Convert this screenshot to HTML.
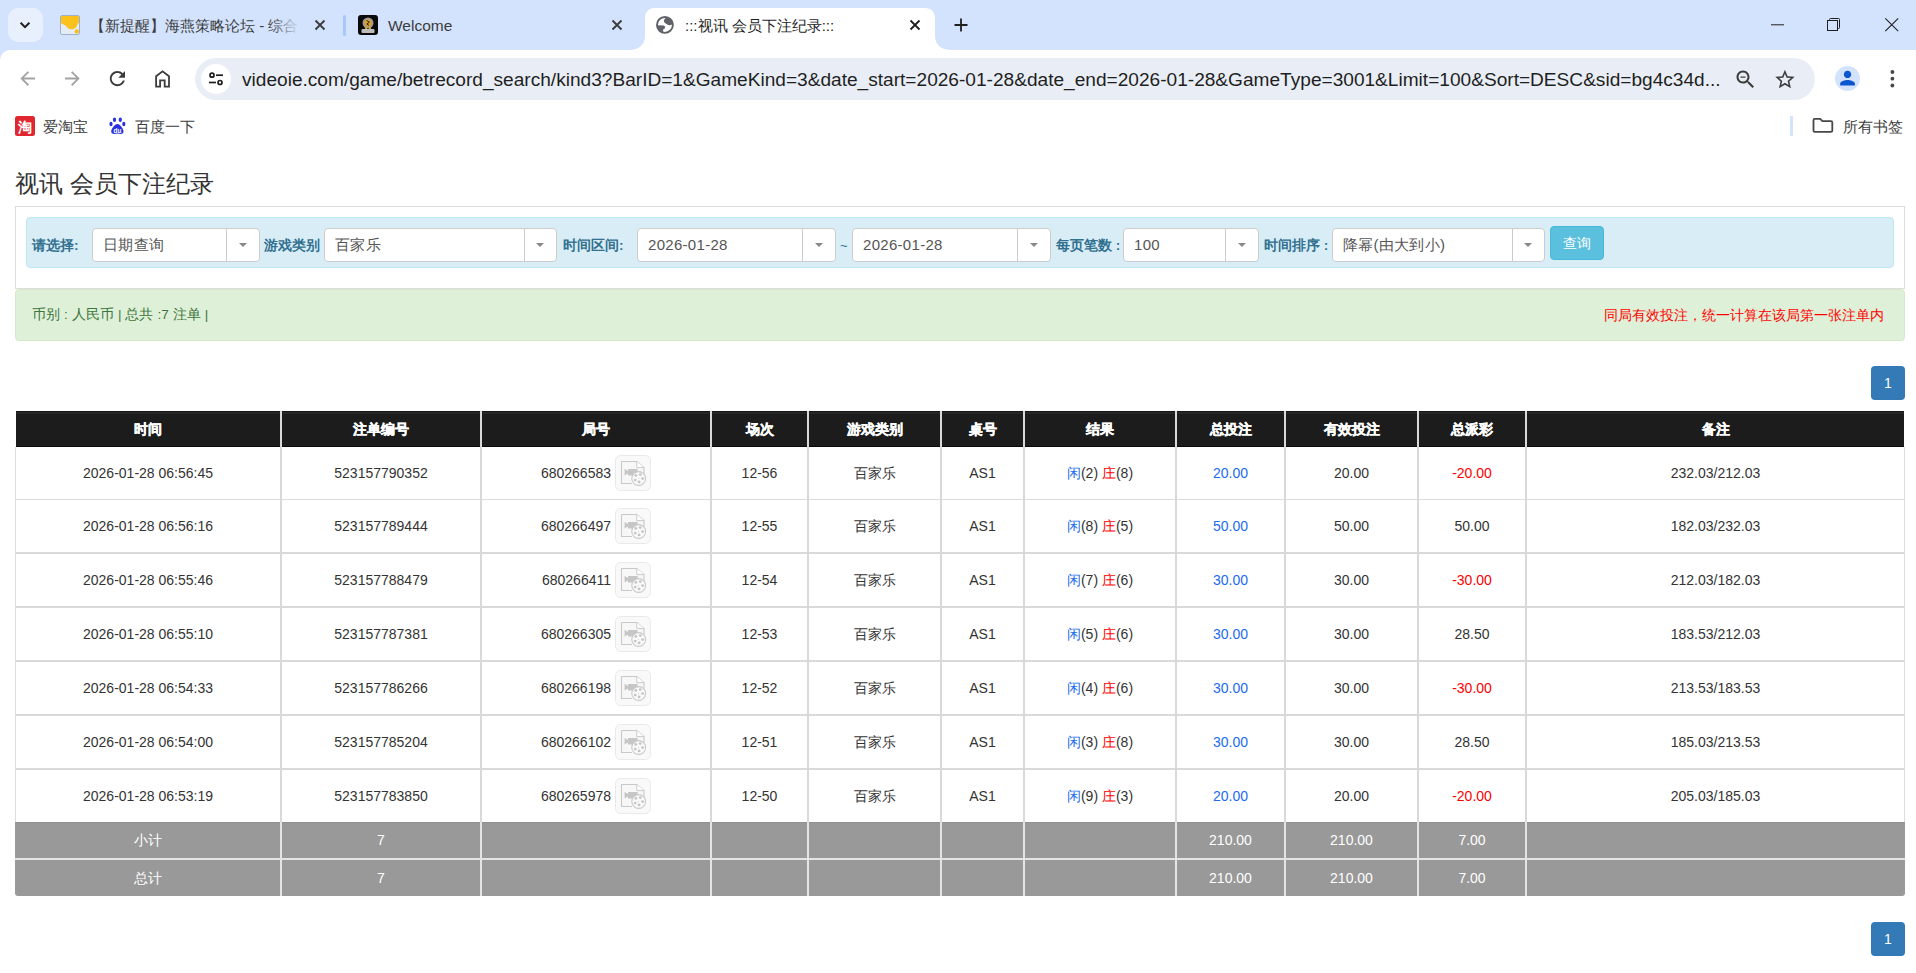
<!DOCTYPE html>
<html><head><meta charset="utf-8"><style>
*{box-sizing:border-box;margin:0;padding:0}
html,body{width:1916px;height:973px;overflow:hidden;background:#fff;font-family:"Liberation Sans",sans-serif;color:#333}
div,span,svg{position:absolute}
.t{white-space:nowrap;line-height:16px}
.c{text-align:center}
</style></head><body>
<div style="left:0px;top:0px;width:1916px;height:62px;background:#d3e3fd"></div>
<div style="left:8px;top:8px;width:35px;height:34px;background:#e8f0fe;border-radius:10px"></div>
<svg style="left:17px;top:17px" width="16" height="16" viewBox="0 0 16 16"><path d="M3.6 5.8 L8 10.2 L12.4 5.8" fill="none" stroke="#1f1f1f" stroke-width="2"/></svg>
<svg style="left:60px;top:15px" width="20" height="20" viewBox="0 0 20 20"><rect x="0.5" y="0.5" width="19" height="19" rx="1.5" fill="#e6ecf5" stroke="#9fb0c8"/><path d="M1 1 H19 V7.6 Q18 8.6 17.4 9.6 A6 6 0 0 1 6.2 11 Q4 10 1 8.2 Z" fill="#fbc21e"/><circle cx="16.8" cy="16.4" r="2.2" fill="#f9bd1a"/></svg>
<div class="t" style="left:90px;top:16.80px;font-size:15px;line-height:18px;color:#3c3c3c;font-weight:400;width:208px;overflow:hidden;">【新提醒】海燕策略论坛 - 综合</div>
<div style="left:270px;top:14px;width:30px;height:22px;background:linear-gradient(to right,rgba(211,227,253,0),#d3e3fd)"></div>
<svg style="left:313px;top:18px" width="14" height="14" viewBox="0 0 14 14"><path d="M2.5 2.5 L11.5 11.5 M11.5 2.5 L2.5 11.5" stroke="#3c3c3c" stroke-width="1.9"/></svg>
<div style="left:343px;top:15px;width:3px;height:21px;background:#a8c7fa;border-radius:2px"></div>
<svg style="left:358px;top:15px" width="20" height="20" viewBox="0 0 20 20"><rect x="0" y="0" width="20" height="20" rx="3" fill="#0a0a0a"/><circle cx="10" cy="8" r="5.5" fill="#9a9a9a"/><circle cx="10" cy="8" r="3.6" fill="#e0a21a"/><path d="M8.6 5.6 L11.4 7.2 L8.8 9 L11 10.4" stroke="#222" stroke-width="1" fill="none"/><rect x="3.5" y="14" width="13" height="4" rx="1" fill="#bdbdbd"/><rect x="7" y="12" width="2" height="2" fill="#e0a21a"/><rect x="11" y="12" width="2" height="2" fill="#e0a21a"/></svg>
<div class="t" style="left:388px;top:16.13px;font-size:15.5px;line-height:19px;color:#3c3c3c;font-weight:400;">Welcome</div>
<svg style="left:610px;top:18px" width="14" height="14" viewBox="0 0 14 14"><path d="M2.5 2.5 L11.5 11.5 M11.5 2.5 L2.5 11.5" stroke="#3c3c3c" stroke-width="1.9"/></svg>
<svg style="left:629px;top:8px" width="322" height="42" viewBox="0 0 322 42"><path d="M0 42 C8 42 16 38 16 28 V10 C16 4 20 0 26 0 H296 C302 0 306 4 306 10 V28 C306 38 314 42 322 42 Z" fill="#fff"/></svg>
<svg style="left:656px;top:16px" width="18" height="18" viewBox="0 0 18 18"><circle cx="8.9" cy="8.9" r="7.95" fill="#fff" stroke="#5f6368" stroke-width="1.9"/><path d="M10 1.2 L7.9 4.2 Q7.4 6.2 9.4 7.3 L11.3 8.5 Q13 9.8 15.6 8.8 L17.5 7.2 A8.5 8.5 0 0 0 10 1.2 Z" fill="#5f6368"/><path d="M0.8 9.2 L7.9 9.4 Q9.8 10.5 8.8 12.5 L7.2 13.6 Q6.8 14.8 7.3 17.2 A8.5 8.5 0 0 1 0.8 9.2 Z" fill="#5f6368"/></svg>
<div class="t" style="left:685px;top:16.80px;font-size:15px;line-height:18px;color:#1f1f1f;font-weight:400;">:::视讯 会员下注纪录:::</div>
<svg style="left:908px;top:18px" width="14" height="14" viewBox="0 0 14 14"><path d="M2.5 2.5 L11.5 11.5 M11.5 2.5 L2.5 11.5" stroke="#1f1f1f" stroke-width="1.8"/></svg>
<svg style="left:953px;top:17px" width="16" height="16" viewBox="0 0 16 16"><path d="M8 1.5 V14.5 M1.5 8 H14.5" stroke="#1f1f1f" stroke-width="1.8"/></svg>
<svg style="left:1770px;top:18px" width="16" height="14" viewBox="0 0 16 14"><path d="M1 6.8 H14" stroke="#1f1f1f" stroke-width="1"/></svg>
<svg style="left:1826px;top:16px" width="16" height="16" viewBox="0 0 16 16"><path d="M3.5 4 V3.5 Q3.5 2.5 4.5 2.5 H12.5 Q13.5 2.5 13.5 3.5 V11.5 Q13.5 12.5 12.5 12.5 H12" fill="none" stroke="#1f1f1f" stroke-width="1"/><rect x="1.5" y="4.5" width="10" height="10" fill="none" stroke="#1f1f1f" stroke-width="1"/></svg>
<svg style="left:1884px;top:17px" width="16" height="16" viewBox="0 0 16 16"><path d="M1.3 1.3 L14.2 14.2 M14.2 1.3 L1.3 14.2" stroke="#1f1f1f" stroke-width="1.1"/></svg>
<div style="left:0;top:50px;width:1916px;height:56px;background:#fff;border-radius:10px 0 0 0"></div>
<svg style="left:0px;top:50px" width="200" height="56" viewBox="0 0 200 56"><path transform="translate(16.7,17.5) scale(0.92)" d="M20 11H7.83l5.59-5.59L12 4l-8 8 8 8 1.41-1.41L7.83 13H20v-2z" fill="#a3a3a3"/><path transform="translate(61.3,17.5) scale(0.92)" d="M12 4l-1.41 1.41L16.17 11H4v2h12.17l-5.58 5.59L12 20l8-8z" fill="#a3a3a3"/><path transform="translate(106,17.2) scale(0.95)" d="M17.65 6.35C16.2 4.9 14.21 4 12 4c-4.42 0-7.99 3.58-7.99 8s3.57 8 7.99 8c3.73 0 6.84-2.550 7.73-6h-2.08c-.82 2.33-3.04 4-5.650 4-3.31 0-6-2.69-6-6s2.690-6 6-6c1.66 0 3.14.69 4.22 1.78L13 11h7V4l-2.35 2.35z" fill="#3c3c3c"/><path d="M156.1 36.6 V26.3 L162.55 21.3 L169 26.3 V36.6 H164.7 V30.3 H160.1 V36.6 Z" fill="none" stroke="#3c3c3c" stroke-width="1.8" stroke-linejoin="miter"/></svg>
<div style="left:195px;top:58px;width:1620px;height:42px;background:#e9eef6;border-radius:21px"></div>
<div style="left:201px;top:64px;width:30px;height:30px;background:#fff;border-radius:15px"></div>
<svg style="left:206px;top:69px" width="20" height="20" viewBox="0 0 20 20"><circle cx="6" cy="6.2" r="2" fill="none" stroke="#1f1f1f" stroke-width="1.7"/><path d="M10 6.2 H17" stroke="#1f1f1f" stroke-width="1.7"/><circle cx="14" cy="13.5" r="2" fill="none" stroke="#1f1f1f" stroke-width="1.7"/><path d="M3 13.5 H10" stroke="#1f1f1f" stroke-width="1.7"/></svg>
<div class="t" style="left:242px;top:67.88px;font-size:19.1px;line-height:23px;color:#1f1f1f;font-weight:400;letter-spacing:0px;">videoie.com/game/betrecord_search/kind3?BarID=1&amp;GameKind=3&amp;date_start=2026-01-28&amp;date_end=2026-01-28&amp;GameType=3001&amp;Limit=100&amp;Sort=DESC&amp;sid=bg4c34d...</div>
<svg style="left:1700px;top:50px" width="216" height="56" viewBox="0 0 216 56"><path transform="translate(33.5,17.5)" d="M15.5 14h-.79l-.28-.27C15.41 12.59 16 11.11 16 9.5 16 5.910 13.09 3 9.5 3S3 5.91 3 9.5 5.91 16 9.5 16c1.61 0 3.09-.59 4.23-1.57l.27.28v.79l5 4.99L20.49 19l-4.99-5zm-6 0C7.01 14 5 11.99 5 9.5S7.01 5 9.5 5 14 7.01 14 9.5 11.99 14 9.5 14zM7 9h5v1.2H7z" fill="#3c3c3c"/><path transform="translate(73.3,17.9) scale(0.97)" d="M22 9.24l-7.19-.62L12 2 9.19 8.63 2 9.24l5.46 4.73L5.82 21 12 17.27 18.18 21l-1.63-7.03L22 9.24zM12 15.4l-3.760 2.27 1-4.28-3.32-2.88 4.38-.38L12 6.1l1.71 4.04 4.38.38-3.32 2.88 1 4.28L12 15.4z" fill="#3c3c3c"/></svg>
<div style="left:1835px;top:66px;width:25px;height:25px;background:#d3e3fd;border-radius:13px"></div>
<svg style="left:1835px;top:66px" width="25" height="25" viewBox="0 0 25 25"><path transform="translate(1.5,1.04) scale(0.92)" d="M12 12c2.21 0 4-1.79 4-4s-1.79-4-4-4-4 1.79-4 4 1.79 4 4 4zm0 2c-2.67 0-8 1.34-8 4v2h16v-2c0-2.66-5.33-4-8-4z" fill="#0b57d0"/></svg>
<svg style="left:1888px;top:69px" width="9" height="20" viewBox="0 0 9 20"><circle cx="4.4" cy="3" r="1.9" fill="#474747"/><circle cx="4.4" cy="9.7" r="1.9" fill="#474747"/><circle cx="4.4" cy="16.5" r="1.9" fill="#474747"/></svg>
<svg style="left:15px;top:116px" width="20" height="20" viewBox="0 0 20 20"><rect x="0" y="0" width="20" height="20" rx="2.5" fill="#e0262f"/><text x="10" y="15.5" font-size="14" text-anchor="middle" fill="#fff" font-weight="700" font-family="Liberation Sans">淘</text></svg>
<div class="t" style="left:43px;top:119.48px;font-size:14.5px;line-height:17px;color:#3c3c3c;font-weight:400;">爱淘宝</div>
<svg style="left:109px;top:117px" width="17" height="18" viewBox="0 0 17 18"><ellipse cx="5.5" cy="2.8" rx="1.6" ry="2.2" fill="#2932e1"/><ellipse cx="11.3" cy="2.8" rx="1.6" ry="2.2" fill="#2932e1"/><ellipse cx="2" cy="7" rx="1.6" ry="2.2" fill="#2932e1"/><ellipse cx="14.8" cy="7" rx="1.6" ry="2.2" fill="#2932e1"/><path d="M8.4 7 C11 7 15 12 14.5 15 C14 17.5 11 17 8.4 16.5 C5.8 17 2.8 17.5 2.3 15 C1.8 12 5.8 7 8.4 7 Z" fill="#2932e1"/><text x="8.4" y="16" font-size="6.5" text-anchor="middle" fill="#fff" font-family="Liberation Sans" font-weight="700">du</text></svg>
<div class="t" style="left:135px;top:119.48px;font-size:14.5px;line-height:17px;color:#3c3c3c;font-weight:400;">百度一下</div>
<div style="left:1790px;top:116px;width:3px;height:20px;background:#d3e3fd;border-radius:1px"></div>
<svg style="left:1812px;top:117px" width="22" height="17" viewBox="0 0 22 17"><path d="M1.5 3.2 C1.5 2.5 2 1.9 2.8 1.9 H8.2 L10.4 4.2 H19 C19.8 4.2 20.3 4.8 20.3 5.5 V13.6 C20.3 14.3 19.8 14.9 19 14.9 H2.8 C2 14.9 1.5 14.3 1.5 13.6 Z" fill="none" stroke="#474747" stroke-width="1.8"/></svg>
<div class="t" style="left:1843px;top:119.48px;font-size:14.5px;line-height:17px;color:#3c3c3c;font-weight:400;">所有书签</div>
<div class="t" style="left:15px;top:169.18px;font-size:24px;line-height:29px;color:#333;font-weight:400;">视讯 会员下注纪录</div>
<div style="left:15px;top:206px;width:1890px;height:83px;border:1px solid #ddd;border-bottom:1px solid #ddd"></div>
<div style="left:26px;top:217px;width:1868px;height:51px;background:#d9edf7;border:1px solid #bce8f1;border-radius:4px"></div>
<div class="t" style="left:32px;top:238.25px;font-size:13.7px;line-height:16px;color:#31708f;font-weight:700;">请选择:</div>
<div style="left:92px;top:228px;width:168px;height:34px;background:#fff;border:1px solid #ccc;border-radius:4px"></div>
<div style="left:226px;top:229px;width:1px;height:32px;background:#ccc"></div>
<svg style="left:239px;top:243px" width="8" height="4" viewBox="0 0 8 4"><path d="M0 0 H8 L4 4 Z" fill="#888"/></svg>
<div class="t" style="left:103px;top:235.80px;font-size:15px;line-height:18px;color:#555;font-weight:400;letter-spacing:0.3px;">日期查询</div>
<div class="t" style="left:264px;top:238.25px;font-size:13.7px;line-height:16px;color:#31708f;font-weight:700;">游戏类别</div>
<div style="left:324px;top:228px;width:233px;height:34px;background:#fff;border:1px solid #ccc;border-radius:4px"></div>
<div style="left:524px;top:229px;width:1px;height:32px;background:#ccc"></div>
<svg style="left:536px;top:243px" width="8" height="4" viewBox="0 0 8 4"><path d="M0 0 H8 L4 4 Z" fill="#888"/></svg>
<div class="t" style="left:335px;top:235.80px;font-size:15px;line-height:18px;color:#555;font-weight:400;letter-spacing:0.3px;">百家乐</div>
<div class="t" style="left:563px;top:238.25px;font-size:13.7px;line-height:16px;color:#31708f;font-weight:700;">时间区间:</div>
<div style="left:637px;top:228px;width:199px;height:34px;background:#fff;border:1px solid #ccc;border-radius:4px"></div>
<div style="left:802px;top:229px;width:1px;height:32px;background:#ccc"></div>
<svg style="left:815px;top:243px" width="8" height="4" viewBox="0 0 8 4"><path d="M0 0 H8 L4 4 Z" fill="#888"/></svg>
<div class="t" style="left:648px;top:235.80px;font-size:15px;line-height:18px;color:#555;font-weight:400;letter-spacing:0.3px;">2026-01-28</div>
<div class="t" style="left:840px;top:237.50px;font-size:13px;line-height:16px;color:#31708f;font-weight:400;">~</div>
<div style="left:852px;top:228px;width:199px;height:34px;background:#fff;border:1px solid #ccc;border-radius:4px"></div>
<div style="left:1017px;top:229px;width:1px;height:32px;background:#ccc"></div>
<svg style="left:1030px;top:243px" width="8" height="4" viewBox="0 0 8 4"><path d="M0 0 H8 L4 4 Z" fill="#888"/></svg>
<div class="t" style="left:863px;top:235.80px;font-size:15px;line-height:18px;color:#555;font-weight:400;letter-spacing:0.3px;">2026-01-28</div>
<div class="t" style="left:1056px;top:238.25px;font-size:13.7px;line-height:16px;color:#31708f;font-weight:700;">每页笔数 :</div>
<div style="left:1123px;top:228px;width:136px;height:34px;background:#fff;border:1px solid #ccc;border-radius:4px"></div>
<div style="left:1225px;top:229px;width:1px;height:32px;background:#ccc"></div>
<svg style="left:1238px;top:243px" width="8" height="4" viewBox="0 0 8 4"><path d="M0 0 H8 L4 4 Z" fill="#888"/></svg>
<div class="t" style="left:1134px;top:235.80px;font-size:15px;line-height:18px;color:#555;font-weight:400;letter-spacing:0.3px;">100</div>
<div class="t" style="left:1264px;top:238.25px;font-size:13.7px;line-height:16px;color:#31708f;font-weight:700;">时间排序 :</div>
<div style="left:1332px;top:228px;width:213px;height:34px;background:#fff;border:1px solid #ccc;border-radius:4px"></div>
<div style="left:1512px;top:229px;width:1px;height:32px;background:#ccc"></div>
<svg style="left:1524px;top:243px" width="8" height="4" viewBox="0 0 8 4"><path d="M0 0 H8 L4 4 Z" fill="#888"/></svg>
<div class="t" style="left:1343px;top:235.80px;font-size:15px;line-height:18px;color:#555;font-weight:400;letter-spacing:0.3px;">降幂(由大到小)</div>
<div style="left:1550px;top:226px;width:54px;height:34px;background:#5bc0de;border:1px solid #46b8da;border-radius:4px"></div>
<div class="t c" style="left:1377.0px;top:235.15px;width:400px;font-size:14px;line-height:17px;color:#fff;font-weight:400;">查询</div>
<div style="left:15px;top:289px;width:1890px;height:52px;background:#dff0d8;border:1px solid #d6e9c6;border-radius:4px"></div>
<div class="t" style="left:32px;top:307.32px;font-size:13.5px;line-height:16px;color:#3c763d;font-weight:400;letter-spacing:0.1px;">币别 : 人民币 | 总共 :7 注单 |</div>
<div class="t" style="left:1284px;top:306.65px;width:600px;text-align:right;font-size:14px;line-height:17px;color:#ff0000;font-weight:400;">同局有效投注，统一计算在该局第一张注单内</div>
<div style="left:1871px;top:366px;width:34px;height:34px;background:#337ab7;border-radius:4px"></div>
<div class="t c" style="left:1871.0px;top:374.65px;width:34px;font-size:14px;line-height:17px;color:#fff;font-weight:400;">1</div>
<div style="left:16px;top:411px;width:1888px;height:36px;background:#1c1c1c;border-top:1px solid #151515;border-bottom:1px solid #0a0a0a"></div>
<div style="left:16px;top:412px;width:1888px;height:2px;background:#262626"></div>
<div style="left:15px;top:447px;width:1890px;height:375px;background:#fff;border-left:1px solid #ddd;border-right:1px solid #ddd"></div>
<div style="left:16px;top:499px;width:1888px;height:1px;background:#dcdcdc"></div>
<div style="left:16px;top:552px;width:1888px;height:2px;background:#d9d9d9"></div>
<div style="left:16px;top:606px;width:1888px;height:2px;background:#d9d9d9"></div>
<div style="left:16px;top:660px;width:1888px;height:2px;background:#d9d9d9"></div>
<div style="left:16px;top:714px;width:1888px;height:2px;background:#d9d9d9"></div>
<div style="left:16px;top:768px;width:1888px;height:2px;background:#d9d9d9"></div>
<div style="left:15px;top:822px;width:1890px;height:74px;background:#999;border-radius:0 0 3px 3px"></div>
<div style="left:16px;top:822px;width:1888px;height:1px;background:#8f8f8f"></div>
<div style="left:15px;top:858px;width:1890px;height:2px;background:#e4e4e4"></div>
<div style="left:280px;top:411px;width:2px;height:36px;background:#d9d9d9"></div>
<div style="left:280px;top:447px;width:2px;height:375px;background:#d9d9d9"></div>
<div style="left:280px;top:822px;width:2px;height:74px;background:#e4e4e4"></div>
<div style="left:480px;top:411px;width:2px;height:36px;background:#d9d9d9"></div>
<div style="left:480px;top:447px;width:2px;height:375px;background:#d9d9d9"></div>
<div style="left:480px;top:822px;width:2px;height:74px;background:#e4e4e4"></div>
<div style="left:710px;top:411px;width:2px;height:36px;background:#d9d9d9"></div>
<div style="left:710px;top:447px;width:2px;height:375px;background:#d9d9d9"></div>
<div style="left:710px;top:822px;width:2px;height:74px;background:#e4e4e4"></div>
<div style="left:807px;top:411px;width:2px;height:36px;background:#d9d9d9"></div>
<div style="left:807px;top:447px;width:2px;height:375px;background:#d9d9d9"></div>
<div style="left:807px;top:822px;width:2px;height:74px;background:#e4e4e4"></div>
<div style="left:940px;top:411px;width:2px;height:36px;background:#d9d9d9"></div>
<div style="left:940px;top:447px;width:2px;height:375px;background:#d9d9d9"></div>
<div style="left:940px;top:822px;width:2px;height:74px;background:#e4e4e4"></div>
<div style="left:1023px;top:411px;width:2px;height:36px;background:#d9d9d9"></div>
<div style="left:1023px;top:447px;width:2px;height:375px;background:#d9d9d9"></div>
<div style="left:1023px;top:822px;width:2px;height:74px;background:#e4e4e4"></div>
<div style="left:1175px;top:411px;width:2px;height:36px;background:#d9d9d9"></div>
<div style="left:1175px;top:447px;width:2px;height:375px;background:#d9d9d9"></div>
<div style="left:1175px;top:822px;width:2px;height:74px;background:#e4e4e4"></div>
<div style="left:1284px;top:411px;width:2px;height:36px;background:#d9d9d9"></div>
<div style="left:1284px;top:447px;width:2px;height:375px;background:#d9d9d9"></div>
<div style="left:1284px;top:822px;width:2px;height:74px;background:#e4e4e4"></div>
<div style="left:1417px;top:411px;width:2px;height:36px;background:#d9d9d9"></div>
<div style="left:1417px;top:447px;width:2px;height:375px;background:#d9d9d9"></div>
<div style="left:1417px;top:822px;width:2px;height:74px;background:#e4e4e4"></div>
<div style="left:1525px;top:411px;width:2px;height:36px;background:#d9d9d9"></div>
<div style="left:1525px;top:447px;width:2px;height:375px;background:#d9d9d9"></div>
<div style="left:1525px;top:822px;width:2px;height:74px;background:#e4e4e4"></div>
<div class="t c" style="left:-2.0px;top:420.65px;width:300px;font-size:14px;line-height:17px;color:#fff;font-weight:700;-webkit-text-stroke:0.35px #fff;">时间</div>
<div class="t c" style="left:231.0px;top:420.65px;width:300px;font-size:14px;line-height:17px;color:#fff;font-weight:700;-webkit-text-stroke:0.35px #fff;">注单编号</div>
<div class="t c" style="left:446.0px;top:420.65px;width:300px;font-size:14px;line-height:17px;color:#fff;font-weight:700;-webkit-text-stroke:0.35px #fff;">局号</div>
<div class="t c" style="left:609.5px;top:420.65px;width:300px;font-size:14px;line-height:17px;color:#fff;font-weight:700;-webkit-text-stroke:0.35px #fff;">场次</div>
<div class="t c" style="left:724.5px;top:420.65px;width:300px;font-size:14px;line-height:17px;color:#fff;font-weight:700;-webkit-text-stroke:0.35px #fff;">游戏类别</div>
<div class="t c" style="left:832.5px;top:420.65px;width:300px;font-size:14px;line-height:17px;color:#fff;font-weight:700;-webkit-text-stroke:0.35px #fff;">桌号</div>
<div class="t c" style="left:950.0px;top:420.65px;width:300px;font-size:14px;line-height:17px;color:#fff;font-weight:700;-webkit-text-stroke:0.35px #fff;">结果</div>
<div class="t c" style="left:1080.5px;top:420.65px;width:300px;font-size:14px;line-height:17px;color:#fff;font-weight:700;-webkit-text-stroke:0.35px #fff;">总投注</div>
<div class="t c" style="left:1201.5px;top:420.65px;width:300px;font-size:14px;line-height:17px;color:#fff;font-weight:700;-webkit-text-stroke:0.35px #fff;">有效投注</div>
<div class="t c" style="left:1322.0px;top:420.65px;width:300px;font-size:14px;line-height:17px;color:#fff;font-weight:700;-webkit-text-stroke:0.35px #fff;">总派彩</div>
<div class="t c" style="left:1565.5px;top:420.65px;width:300px;font-size:14px;line-height:17px;color:#fff;font-weight:700;-webkit-text-stroke:0.35px #fff;">备注</div>
<div class="t c" style="left:-52.0px;top:464.65px;width:400px;font-size:14px;line-height:17px;color:#333;font-weight:400;">2026-01-28 06:56:45</div>
<div class="t c" style="left:181.0px;top:464.65px;width:400px;font-size:14px;line-height:17px;color:#333;font-weight:400;">523157790352</div>
<div class="t" style="left:11px;top:464.65px;width:600px;text-align:right;font-size:14px;line-height:17px;color:#333;font-weight:400;">680266583</div>
<svg style="left:615px;top:455px" width="36" height="36" viewBox="0 0 36 36"><rect x="0.5" y="0.5" width="35" height="35" rx="5" fill="#f9f9f9" stroke="#e9e9e9"/><path d="M6.5 6.5 H21.8 L29 12.6 V28 M6.5 6.5 V28.5 H17" fill="#f7f7f7" stroke="#c9c9c9" stroke-width="1.1"/><path d="M21.8 6.5 V12.6 H29" fill="#fff" stroke="#c9c9c9" stroke-width="1"/><path d="M9.6 13.8 L13 16 V14 H22.6 V20.6 H13 V18.6 L9.6 20.6 Z" fill="#c6c6c6"/><circle cx="23.7" cy="23.5" r="6.9" fill="#fafafa" stroke="#c9c9c9" stroke-width="1.1"/><circle cx="20.8" cy="20.4" r="1.45" fill="#c6c6c6"/><circle cx="25.3" cy="19.6" r="1.45" fill="#c6c6c6"/><circle cx="27.6" cy="23.6" r="1.45" fill="#c6c6c6"/><circle cx="24.1" cy="26.9" r="1.45" fill="#c6c6c6"/><circle cx="20.2" cy="25.1" r="1.45" fill="#c6c6c6"/><circle cx="23.7" cy="23.5" r="0.5" fill="#c6c6c6"/></svg>
<div class="t c" style="left:559.5px;top:464.65px;width:400px;font-size:14px;line-height:17px;color:#333;font-weight:400;">12-56</div>
<div class="t c" style="left:674.5px;top:464.65px;width:400px;font-size:14px;line-height:17px;color:#333;font-weight:400;">百家乐</div>
<div class="t c" style="left:782.5px;top:464.65px;width:400px;font-size:14px;line-height:17px;color:#333;font-weight:400;">AS1</div>
<div class="t c" style="left:900.0px;top:464.65px;width:400px;font-size:14px;line-height:17px;color:#333;font-weight:400;"><span style="position:static;color:#1a6cf0">闲</span>(2) <span style="position:static;color:#f00">庄</span>(8)</div>
<div class="t c" style="left:1030.5px;top:464.65px;width:400px;font-size:14px;line-height:17px;color:#1a6cf0;font-weight:400;">20.00</div>
<div class="t c" style="left:1151.5px;top:464.65px;width:400px;font-size:14px;line-height:17px;color:#333;font-weight:400;">20.00</div>
<div class="t c" style="left:1272.0px;top:464.65px;width:400px;font-size:14px;line-height:17px;color:#f00;font-weight:400;">-20.00</div>
<div class="t c" style="left:1515.5px;top:464.65px;width:400px;font-size:14px;line-height:17px;color:#333;font-weight:400;">232.03/212.03</div>
<div class="t c" style="left:-52.0px;top:517.65px;width:400px;font-size:14px;line-height:17px;color:#333;font-weight:400;">2026-01-28 06:56:16</div>
<div class="t c" style="left:181.0px;top:517.65px;width:400px;font-size:14px;line-height:17px;color:#333;font-weight:400;">523157789444</div>
<div class="t" style="left:11px;top:517.65px;width:600px;text-align:right;font-size:14px;line-height:17px;color:#333;font-weight:400;">680266497</div>
<svg style="left:615px;top:508px" width="36" height="36" viewBox="0 0 36 36"><rect x="0.5" y="0.5" width="35" height="35" rx="5" fill="#f9f9f9" stroke="#e9e9e9"/><path d="M6.5 6.5 H21.8 L29 12.6 V28 M6.5 6.5 V28.5 H17" fill="#f7f7f7" stroke="#c9c9c9" stroke-width="1.1"/><path d="M21.8 6.5 V12.6 H29" fill="#fff" stroke="#c9c9c9" stroke-width="1"/><path d="M9.6 13.8 L13 16 V14 H22.6 V20.6 H13 V18.6 L9.6 20.6 Z" fill="#c6c6c6"/><circle cx="23.7" cy="23.5" r="6.9" fill="#fafafa" stroke="#c9c9c9" stroke-width="1.1"/><circle cx="20.8" cy="20.4" r="1.45" fill="#c6c6c6"/><circle cx="25.3" cy="19.6" r="1.45" fill="#c6c6c6"/><circle cx="27.6" cy="23.6" r="1.45" fill="#c6c6c6"/><circle cx="24.1" cy="26.9" r="1.45" fill="#c6c6c6"/><circle cx="20.2" cy="25.1" r="1.45" fill="#c6c6c6"/><circle cx="23.7" cy="23.5" r="0.5" fill="#c6c6c6"/></svg>
<div class="t c" style="left:559.5px;top:517.65px;width:400px;font-size:14px;line-height:17px;color:#333;font-weight:400;">12-55</div>
<div class="t c" style="left:674.5px;top:517.65px;width:400px;font-size:14px;line-height:17px;color:#333;font-weight:400;">百家乐</div>
<div class="t c" style="left:782.5px;top:517.65px;width:400px;font-size:14px;line-height:17px;color:#333;font-weight:400;">AS1</div>
<div class="t c" style="left:900.0px;top:517.65px;width:400px;font-size:14px;line-height:17px;color:#333;font-weight:400;"><span style="position:static;color:#1a6cf0">闲</span>(8) <span style="position:static;color:#f00">庄</span>(5)</div>
<div class="t c" style="left:1030.5px;top:517.65px;width:400px;font-size:14px;line-height:17px;color:#1a6cf0;font-weight:400;">50.00</div>
<div class="t c" style="left:1151.5px;top:517.65px;width:400px;font-size:14px;line-height:17px;color:#333;font-weight:400;">50.00</div>
<div class="t c" style="left:1272.0px;top:517.65px;width:400px;font-size:14px;line-height:17px;color:#333;font-weight:400;">50.00</div>
<div class="t c" style="left:1515.5px;top:517.65px;width:400px;font-size:14px;line-height:17px;color:#333;font-weight:400;">182.03/232.03</div>
<div class="t c" style="left:-52.0px;top:571.65px;width:400px;font-size:14px;line-height:17px;color:#333;font-weight:400;">2026-01-28 06:55:46</div>
<div class="t c" style="left:181.0px;top:571.65px;width:400px;font-size:14px;line-height:17px;color:#333;font-weight:400;">523157788479</div>
<div class="t" style="left:11px;top:571.65px;width:600px;text-align:right;font-size:14px;line-height:17px;color:#333;font-weight:400;">680266411</div>
<svg style="left:615px;top:562px" width="36" height="36" viewBox="0 0 36 36"><rect x="0.5" y="0.5" width="35" height="35" rx="5" fill="#f9f9f9" stroke="#e9e9e9"/><path d="M6.5 6.5 H21.8 L29 12.6 V28 M6.5 6.5 V28.5 H17" fill="#f7f7f7" stroke="#c9c9c9" stroke-width="1.1"/><path d="M21.8 6.5 V12.6 H29" fill="#fff" stroke="#c9c9c9" stroke-width="1"/><path d="M9.6 13.8 L13 16 V14 H22.6 V20.6 H13 V18.6 L9.6 20.6 Z" fill="#c6c6c6"/><circle cx="23.7" cy="23.5" r="6.9" fill="#fafafa" stroke="#c9c9c9" stroke-width="1.1"/><circle cx="20.8" cy="20.4" r="1.45" fill="#c6c6c6"/><circle cx="25.3" cy="19.6" r="1.45" fill="#c6c6c6"/><circle cx="27.6" cy="23.6" r="1.45" fill="#c6c6c6"/><circle cx="24.1" cy="26.9" r="1.45" fill="#c6c6c6"/><circle cx="20.2" cy="25.1" r="1.45" fill="#c6c6c6"/><circle cx="23.7" cy="23.5" r="0.5" fill="#c6c6c6"/></svg>
<div class="t c" style="left:559.5px;top:571.65px;width:400px;font-size:14px;line-height:17px;color:#333;font-weight:400;">12-54</div>
<div class="t c" style="left:674.5px;top:571.65px;width:400px;font-size:14px;line-height:17px;color:#333;font-weight:400;">百家乐</div>
<div class="t c" style="left:782.5px;top:571.65px;width:400px;font-size:14px;line-height:17px;color:#333;font-weight:400;">AS1</div>
<div class="t c" style="left:900.0px;top:571.65px;width:400px;font-size:14px;line-height:17px;color:#333;font-weight:400;"><span style="position:static;color:#1a6cf0">闲</span>(7) <span style="position:static;color:#f00">庄</span>(6)</div>
<div class="t c" style="left:1030.5px;top:571.65px;width:400px;font-size:14px;line-height:17px;color:#1a6cf0;font-weight:400;">30.00</div>
<div class="t c" style="left:1151.5px;top:571.65px;width:400px;font-size:14px;line-height:17px;color:#333;font-weight:400;">30.00</div>
<div class="t c" style="left:1272.0px;top:571.65px;width:400px;font-size:14px;line-height:17px;color:#f00;font-weight:400;">-30.00</div>
<div class="t c" style="left:1515.5px;top:571.65px;width:400px;font-size:14px;line-height:17px;color:#333;font-weight:400;">212.03/182.03</div>
<div class="t c" style="left:-52.0px;top:625.65px;width:400px;font-size:14px;line-height:17px;color:#333;font-weight:400;">2026-01-28 06:55:10</div>
<div class="t c" style="left:181.0px;top:625.65px;width:400px;font-size:14px;line-height:17px;color:#333;font-weight:400;">523157787381</div>
<div class="t" style="left:11px;top:625.65px;width:600px;text-align:right;font-size:14px;line-height:17px;color:#333;font-weight:400;">680266305</div>
<svg style="left:615px;top:616px" width="36" height="36" viewBox="0 0 36 36"><rect x="0.5" y="0.5" width="35" height="35" rx="5" fill="#f9f9f9" stroke="#e9e9e9"/><path d="M6.5 6.5 H21.8 L29 12.6 V28 M6.5 6.5 V28.5 H17" fill="#f7f7f7" stroke="#c9c9c9" stroke-width="1.1"/><path d="M21.8 6.5 V12.6 H29" fill="#fff" stroke="#c9c9c9" stroke-width="1"/><path d="M9.6 13.8 L13 16 V14 H22.6 V20.6 H13 V18.6 L9.6 20.6 Z" fill="#c6c6c6"/><circle cx="23.7" cy="23.5" r="6.9" fill="#fafafa" stroke="#c9c9c9" stroke-width="1.1"/><circle cx="20.8" cy="20.4" r="1.45" fill="#c6c6c6"/><circle cx="25.3" cy="19.6" r="1.45" fill="#c6c6c6"/><circle cx="27.6" cy="23.6" r="1.45" fill="#c6c6c6"/><circle cx="24.1" cy="26.9" r="1.45" fill="#c6c6c6"/><circle cx="20.2" cy="25.1" r="1.45" fill="#c6c6c6"/><circle cx="23.7" cy="23.5" r="0.5" fill="#c6c6c6"/></svg>
<div class="t c" style="left:559.5px;top:625.65px;width:400px;font-size:14px;line-height:17px;color:#333;font-weight:400;">12-53</div>
<div class="t c" style="left:674.5px;top:625.65px;width:400px;font-size:14px;line-height:17px;color:#333;font-weight:400;">百家乐</div>
<div class="t c" style="left:782.5px;top:625.65px;width:400px;font-size:14px;line-height:17px;color:#333;font-weight:400;">AS1</div>
<div class="t c" style="left:900.0px;top:625.65px;width:400px;font-size:14px;line-height:17px;color:#333;font-weight:400;"><span style="position:static;color:#1a6cf0">闲</span>(5) <span style="position:static;color:#f00">庄</span>(6)</div>
<div class="t c" style="left:1030.5px;top:625.65px;width:400px;font-size:14px;line-height:17px;color:#1a6cf0;font-weight:400;">30.00</div>
<div class="t c" style="left:1151.5px;top:625.65px;width:400px;font-size:14px;line-height:17px;color:#333;font-weight:400;">30.00</div>
<div class="t c" style="left:1272.0px;top:625.65px;width:400px;font-size:14px;line-height:17px;color:#333;font-weight:400;">28.50</div>
<div class="t c" style="left:1515.5px;top:625.65px;width:400px;font-size:14px;line-height:17px;color:#333;font-weight:400;">183.53/212.03</div>
<div class="t c" style="left:-52.0px;top:679.65px;width:400px;font-size:14px;line-height:17px;color:#333;font-weight:400;">2026-01-28 06:54:33</div>
<div class="t c" style="left:181.0px;top:679.65px;width:400px;font-size:14px;line-height:17px;color:#333;font-weight:400;">523157786266</div>
<div class="t" style="left:11px;top:679.65px;width:600px;text-align:right;font-size:14px;line-height:17px;color:#333;font-weight:400;">680266198</div>
<svg style="left:615px;top:670px" width="36" height="36" viewBox="0 0 36 36"><rect x="0.5" y="0.5" width="35" height="35" rx="5" fill="#f9f9f9" stroke="#e9e9e9"/><path d="M6.5 6.5 H21.8 L29 12.6 V28 M6.5 6.5 V28.5 H17" fill="#f7f7f7" stroke="#c9c9c9" stroke-width="1.1"/><path d="M21.8 6.5 V12.6 H29" fill="#fff" stroke="#c9c9c9" stroke-width="1"/><path d="M9.6 13.8 L13 16 V14 H22.6 V20.6 H13 V18.6 L9.6 20.6 Z" fill="#c6c6c6"/><circle cx="23.7" cy="23.5" r="6.9" fill="#fafafa" stroke="#c9c9c9" stroke-width="1.1"/><circle cx="20.8" cy="20.4" r="1.45" fill="#c6c6c6"/><circle cx="25.3" cy="19.6" r="1.45" fill="#c6c6c6"/><circle cx="27.6" cy="23.6" r="1.45" fill="#c6c6c6"/><circle cx="24.1" cy="26.9" r="1.45" fill="#c6c6c6"/><circle cx="20.2" cy="25.1" r="1.45" fill="#c6c6c6"/><circle cx="23.7" cy="23.5" r="0.5" fill="#c6c6c6"/></svg>
<div class="t c" style="left:559.5px;top:679.65px;width:400px;font-size:14px;line-height:17px;color:#333;font-weight:400;">12-52</div>
<div class="t c" style="left:674.5px;top:679.65px;width:400px;font-size:14px;line-height:17px;color:#333;font-weight:400;">百家乐</div>
<div class="t c" style="left:782.5px;top:679.65px;width:400px;font-size:14px;line-height:17px;color:#333;font-weight:400;">AS1</div>
<div class="t c" style="left:900.0px;top:679.65px;width:400px;font-size:14px;line-height:17px;color:#333;font-weight:400;"><span style="position:static;color:#1a6cf0">闲</span>(4) <span style="position:static;color:#f00">庄</span>(6)</div>
<div class="t c" style="left:1030.5px;top:679.65px;width:400px;font-size:14px;line-height:17px;color:#1a6cf0;font-weight:400;">30.00</div>
<div class="t c" style="left:1151.5px;top:679.65px;width:400px;font-size:14px;line-height:17px;color:#333;font-weight:400;">30.00</div>
<div class="t c" style="left:1272.0px;top:679.65px;width:400px;font-size:14px;line-height:17px;color:#f00;font-weight:400;">-30.00</div>
<div class="t c" style="left:1515.5px;top:679.65px;width:400px;font-size:14px;line-height:17px;color:#333;font-weight:400;">213.53/183.53</div>
<div class="t c" style="left:-52.0px;top:733.65px;width:400px;font-size:14px;line-height:17px;color:#333;font-weight:400;">2026-01-28 06:54:00</div>
<div class="t c" style="left:181.0px;top:733.65px;width:400px;font-size:14px;line-height:17px;color:#333;font-weight:400;">523157785204</div>
<div class="t" style="left:11px;top:733.65px;width:600px;text-align:right;font-size:14px;line-height:17px;color:#333;font-weight:400;">680266102</div>
<svg style="left:615px;top:724px" width="36" height="36" viewBox="0 0 36 36"><rect x="0.5" y="0.5" width="35" height="35" rx="5" fill="#f9f9f9" stroke="#e9e9e9"/><path d="M6.5 6.5 H21.8 L29 12.6 V28 M6.5 6.5 V28.5 H17" fill="#f7f7f7" stroke="#c9c9c9" stroke-width="1.1"/><path d="M21.8 6.5 V12.6 H29" fill="#fff" stroke="#c9c9c9" stroke-width="1"/><path d="M9.6 13.8 L13 16 V14 H22.6 V20.6 H13 V18.6 L9.6 20.6 Z" fill="#c6c6c6"/><circle cx="23.7" cy="23.5" r="6.9" fill="#fafafa" stroke="#c9c9c9" stroke-width="1.1"/><circle cx="20.8" cy="20.4" r="1.45" fill="#c6c6c6"/><circle cx="25.3" cy="19.6" r="1.45" fill="#c6c6c6"/><circle cx="27.6" cy="23.6" r="1.45" fill="#c6c6c6"/><circle cx="24.1" cy="26.9" r="1.45" fill="#c6c6c6"/><circle cx="20.2" cy="25.1" r="1.45" fill="#c6c6c6"/><circle cx="23.7" cy="23.5" r="0.5" fill="#c6c6c6"/></svg>
<div class="t c" style="left:559.5px;top:733.65px;width:400px;font-size:14px;line-height:17px;color:#333;font-weight:400;">12-51</div>
<div class="t c" style="left:674.5px;top:733.65px;width:400px;font-size:14px;line-height:17px;color:#333;font-weight:400;">百家乐</div>
<div class="t c" style="left:782.5px;top:733.65px;width:400px;font-size:14px;line-height:17px;color:#333;font-weight:400;">AS1</div>
<div class="t c" style="left:900.0px;top:733.65px;width:400px;font-size:14px;line-height:17px;color:#333;font-weight:400;"><span style="position:static;color:#1a6cf0">闲</span>(3) <span style="position:static;color:#f00">庄</span>(8)</div>
<div class="t c" style="left:1030.5px;top:733.65px;width:400px;font-size:14px;line-height:17px;color:#1a6cf0;font-weight:400;">30.00</div>
<div class="t c" style="left:1151.5px;top:733.65px;width:400px;font-size:14px;line-height:17px;color:#333;font-weight:400;">30.00</div>
<div class="t c" style="left:1272.0px;top:733.65px;width:400px;font-size:14px;line-height:17px;color:#333;font-weight:400;">28.50</div>
<div class="t c" style="left:1515.5px;top:733.65px;width:400px;font-size:14px;line-height:17px;color:#333;font-weight:400;">185.03/213.53</div>
<div class="t c" style="left:-52.0px;top:787.65px;width:400px;font-size:14px;line-height:17px;color:#333;font-weight:400;">2026-01-28 06:53:19</div>
<div class="t c" style="left:181.0px;top:787.65px;width:400px;font-size:14px;line-height:17px;color:#333;font-weight:400;">523157783850</div>
<div class="t" style="left:11px;top:787.65px;width:600px;text-align:right;font-size:14px;line-height:17px;color:#333;font-weight:400;">680265978</div>
<svg style="left:615px;top:778px" width="36" height="36" viewBox="0 0 36 36"><rect x="0.5" y="0.5" width="35" height="35" rx="5" fill="#f9f9f9" stroke="#e9e9e9"/><path d="M6.5 6.5 H21.8 L29 12.6 V28 M6.5 6.5 V28.5 H17" fill="#f7f7f7" stroke="#c9c9c9" stroke-width="1.1"/><path d="M21.8 6.5 V12.6 H29" fill="#fff" stroke="#c9c9c9" stroke-width="1"/><path d="M9.6 13.8 L13 16 V14 H22.6 V20.6 H13 V18.6 L9.6 20.6 Z" fill="#c6c6c6"/><circle cx="23.7" cy="23.5" r="6.9" fill="#fafafa" stroke="#c9c9c9" stroke-width="1.1"/><circle cx="20.8" cy="20.4" r="1.45" fill="#c6c6c6"/><circle cx="25.3" cy="19.6" r="1.45" fill="#c6c6c6"/><circle cx="27.6" cy="23.6" r="1.45" fill="#c6c6c6"/><circle cx="24.1" cy="26.9" r="1.45" fill="#c6c6c6"/><circle cx="20.2" cy="25.1" r="1.45" fill="#c6c6c6"/><circle cx="23.7" cy="23.5" r="0.5" fill="#c6c6c6"/></svg>
<div class="t c" style="left:559.5px;top:787.65px;width:400px;font-size:14px;line-height:17px;color:#333;font-weight:400;">12-50</div>
<div class="t c" style="left:674.5px;top:787.65px;width:400px;font-size:14px;line-height:17px;color:#333;font-weight:400;">百家乐</div>
<div class="t c" style="left:782.5px;top:787.65px;width:400px;font-size:14px;line-height:17px;color:#333;font-weight:400;">AS1</div>
<div class="t c" style="left:900.0px;top:787.65px;width:400px;font-size:14px;line-height:17px;color:#333;font-weight:400;"><span style="position:static;color:#1a6cf0">闲</span>(9) <span style="position:static;color:#f00">庄</span>(3)</div>
<div class="t c" style="left:1030.5px;top:787.65px;width:400px;font-size:14px;line-height:17px;color:#1a6cf0;font-weight:400;">20.00</div>
<div class="t c" style="left:1151.5px;top:787.65px;width:400px;font-size:14px;line-height:17px;color:#333;font-weight:400;">20.00</div>
<div class="t c" style="left:1272.0px;top:787.65px;width:400px;font-size:14px;line-height:17px;color:#f00;font-weight:400;">-20.00</div>
<div class="t c" style="left:1515.5px;top:787.65px;width:400px;font-size:14px;line-height:17px;color:#333;font-weight:400;">205.03/185.03</div>
<div class="t c" style="left:-52.0px;top:831.65px;width:400px;font-size:14px;line-height:17px;color:#fff;font-weight:400;">小计</div>
<div class="t c" style="left:181.0px;top:831.65px;width:400px;font-size:14px;line-height:17px;color:#fff;font-weight:400;">7</div>
<div class="t c" style="left:1030.5px;top:831.65px;width:400px;font-size:14px;line-height:17px;color:#fff;font-weight:400;">210.00</div>
<div class="t c" style="left:1151.5px;top:831.65px;width:400px;font-size:14px;line-height:17px;color:#fff;font-weight:400;">210.00</div>
<div class="t c" style="left:1272.0px;top:831.65px;width:400px;font-size:14px;line-height:17px;color:#fff;font-weight:400;">7.00</div>
<div class="t c" style="left:-52.0px;top:869.65px;width:400px;font-size:14px;line-height:17px;color:#fff;font-weight:400;">总计</div>
<div class="t c" style="left:181.0px;top:869.65px;width:400px;font-size:14px;line-height:17px;color:#fff;font-weight:400;">7</div>
<div class="t c" style="left:1030.5px;top:869.65px;width:400px;font-size:14px;line-height:17px;color:#fff;font-weight:400;">210.00</div>
<div class="t c" style="left:1151.5px;top:869.65px;width:400px;font-size:14px;line-height:17px;color:#fff;font-weight:400;">210.00</div>
<div class="t c" style="left:1272.0px;top:869.65px;width:400px;font-size:14px;line-height:17px;color:#fff;font-weight:400;">7.00</div>
<div style="left:1871px;top:922px;width:34px;height:34px;background:#337ab7;border-radius:4px"></div>
<div class="t c" style="left:1871.0px;top:930.65px;width:34px;font-size:14px;line-height:17px;color:#fff;font-weight:400;">1</div>
</body></html>
